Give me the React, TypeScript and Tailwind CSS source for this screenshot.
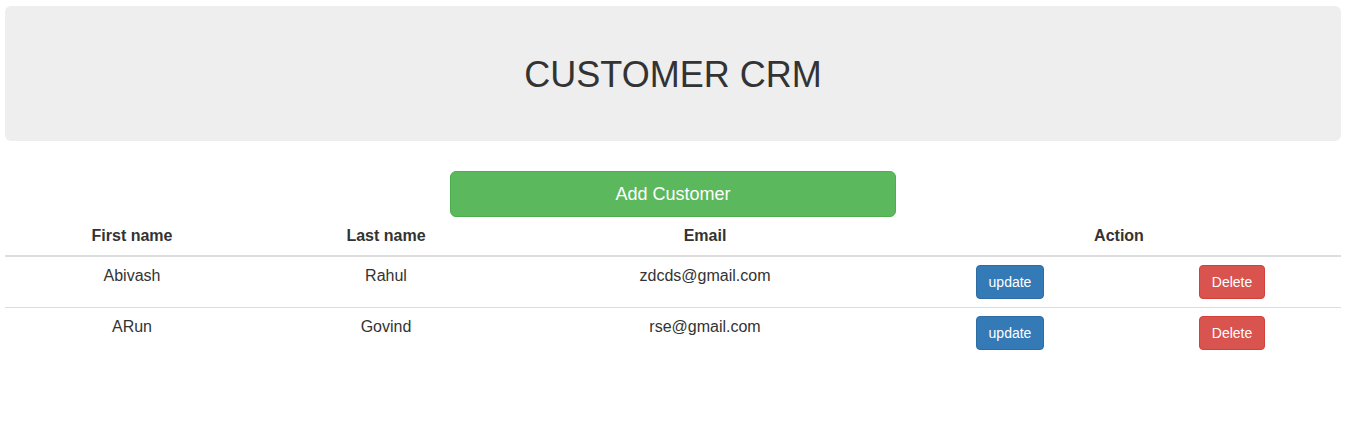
import React from "react";

const customers = [
  { first: "Abivash", last: "Rahul", email: "zdcds@gmail.com" },
  { first: "ARun", last: "Govind", email: "rse@gmail.com" },
];

export default function App() {
  return (
    <div className="min-h-screen bg-white text-[#333] font-['Liberation_Sans',Arial,sans-serif]">
      <div className="ml-[5px] w-[1336px] pt-[6px]">
        {/* Jumbotron header */}
        <div className="bg-[#eee] rounded-[6px] pt-[49px] pb-[46px] text-center">
          <h1 className="text-[36px] leading-[39.6px] font-normal">CUSTOMER CRM</h1>
        </div>

        {/* Add button */}
        <div className="flex justify-center mt-[30px]">
          <button className="w-[446px] h-[46px] bg-[#5cb85c] border border-[#4cae4c] rounded-[6px] text-white text-[18px] leading-[24px]">
            Add Customer
          </button>
        </div>

        {/* Customers table */}
        <table className="w-[1336px] table-fixed border-collapse text-[16px] leading-[22.85px]">
          <colgroup>
            <col className="w-[254px]" />
            <col className="w-[254px]" />
            <col className="w-[384px]" />
            <col className="w-[226px]" />
            <col className="w-[218px]" />
          </colgroup>
          <thead>
            <tr className="border-b-2 border-[#ddd]">
              <th className="p-2 font-bold text-center">First name</th>
              <th className="p-2 font-bold text-center">Last name</th>
              <th className="p-2 font-bold text-center">Email</th>
              <th colSpan={2} className="p-2 font-bold text-center">Action</th>
            </tr>
          </thead>
          <tbody>
            {customers.map((c, idx) => (
              <tr key={idx} className={idx > 0 ? "border-t border-[#ddd]" : ""}>
                <td className="p-2 align-top text-center">{c.first}</td>
                <td className="p-2 align-top text-center">{c.last}</td>
                <td className="p-2 align-top text-center">{c.email}</td>
                <td className="p-2 align-top text-center">
                  <button className="h-[34px] px-3 bg-[#337ab7] border border-[#2e6da4] rounded-[4px] text-white text-[14px] leading-[20px]">
                    update
                  </button>
                </td>
                <td className="p-2 align-top text-center">
                  <button className="h-[34px] px-3 bg-[#d9534f] border border-[#d43f3a] rounded-[4px] text-white text-[14px] leading-[20px]">
                    Delete
                  </button>
                </td>
              </tr>
            ))}
          </tbody>
        </table>
      </div>
    </div>
  );
}
